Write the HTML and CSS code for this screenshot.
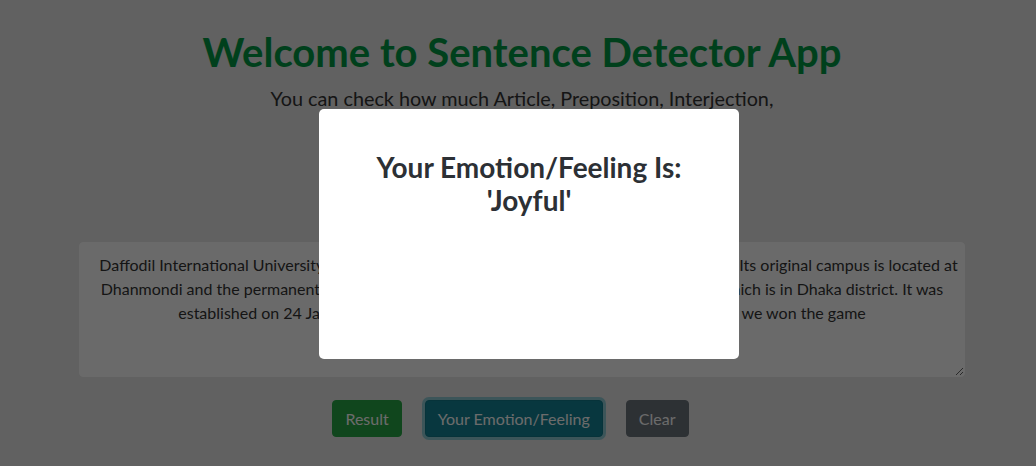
FILE: index.html
```html
<!DOCTYPE html>
<html lang="en">
<head>
<meta charset="utf-8">
<title>Sentence Detector App</title>
<link rel="stylesheet" href="styles.css">
</head>
<body>
<main class="page">
  <h1 class="title">Welcome to Sentence Detector App</h1>
  <p class="subtitle">You can check how much Article, Preposition, Interjection, Conjunction and Pronoun in your sentence.</p>
  <textarea class="input" spellcheck="false">Daffodil International University (DIU) is a private university situated in Dhaka, Bangladesh. Its original campus is located at
Dhanmondi and the permanent campus is situated at Daffodil Smart City, Ashulia, Savar, which is in Dhaka district. It was
established on 24 January 2002. Today all of us are so very much happy because we won the game</textarea>
  <div class="actions">
    <button class="btn btn-success" type="button">Result</button>
    <button class="btn btn-info is-focused" type="button">Your Emotion/Feeling</button>
    <button class="btn btn-secondary" type="button">Clear</button>
  </div>
</main>
<div class="overlay">
  <div class="modal">
    <h2 class="modal-title">Your Emotion/Feeling Is:<br>'Joyful'</h2>
  </div>
</div>
</body>
</html>
```
FILE: styles.css
```css
* { box-sizing: border-box; }

html, body {
  margin: 0;
  height: 100%;
}

body {
  background: #e6e6e6;
  font-family: Lato, "Open Sans", "Liberation Sans", sans-serif;
  color: #333;
  overflow: hidden;
}

.page {
  display: flex;
  flex-direction: column;
  align-items: center;
  padding: 0 71px 0 79px;
  text-align: center;
}

.title {
  margin: 28px 0 7px;
  font-size: 40px;
  line-height: 48px;
  font-weight: 700;
  color: #009944;
}

.subtitle {
  margin: 0 0 99px;
  max-width: 520px;
  font-size: 19.8px;
  line-height: 30px;
  color: #333;
}

.input {
  width: 100%;
  height: 135px;
  padding: 10px 3px;
  border: 1px solid #fdfdfd;
  border-radius: 4px;
  background: #fdfdfd;
  font-family: inherit;
  font-size: 16px;
  line-height: 24px;
  color: #333;
  text-align: center;
  text-indent: 13px;
  resize: vertical;
  margin: 0 0 23px;
}

.actions {
  display: flex;
  gap: 23px;
  padding-right: 23px;
}

.btn {
  font-family: inherit;
  font-size: 16px;
  line-height: 24px;
  padding: 6px 12px;
  height: 37px;
  border: 1px solid transparent;
  border-radius: 4px;
  color: #fff;
  cursor: pointer;
}

.btn-success { background: #28a745; border-color: #28a745; }
.btn-info { background: #138496; border-color: #117a8b; }
.btn-secondary { background: #6c757d; border-color: #6c757d; }

.is-focused {
  box-shadow: 0 0 0 3px rgba(58, 176, 195, 0.5);
}

.overlay {
  position: fixed;
  inset: 0;
  background: rgba(0, 0, 0, 0.58);
  padding: 109px 0 0 319px;
}

.modal {
  width: 420px;
  height: 250px;
  background: #fff;
  border-radius: 5px;
  padding: 42px 20px 0;
  text-align: center;
}

.modal-title {
  margin: 0;
  font-size: 28px;
  line-height: 33px;
  font-weight: 700;
  color: #2c3035;
}
```
